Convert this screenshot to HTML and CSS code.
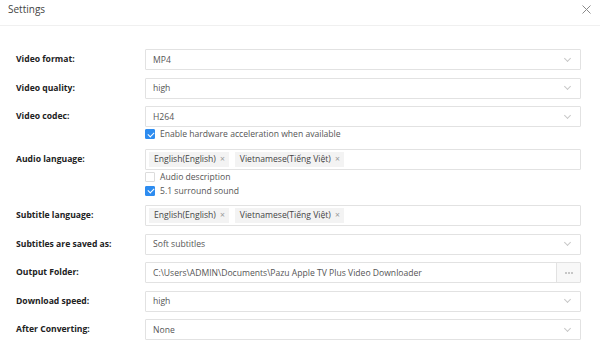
FILE: index.html
```html
<!DOCTYPE html>
<html lang="en">
<head>
    <meta charset="UTF-8">
    <title>Settings</title>
    <link rel="stylesheet" href="styles.css">
</head>
<body>
    <div class="dialog">
        <div class="dialog-header">
            <span class="dialog-title">Settings</span>
            <span class="dialog-close">
                <svg width="9" height="9" viewBox="0 0 9 9"><path d="M0.5 0.5 L8.5 8.5 M8.5 0.5 L0.5 8.5" stroke="#8a8a8a" stroke-width="1" fill="none"/></svg>
            </span>
        </div>

        <div class="form">
            <div class="row">
                <div class="label">Video format:</div>
                <div class="control">
                    <div class="select"><span>MP4</span><i class="chevron"></i></div>
                </div>
            </div>

            <div class="row">
                <div class="label">Video quality:</div>
                <div class="control">
                    <div class="select"><span>high</span><i class="chevron"></i></div>
                </div>
            </div>

            <div class="row">
                <div class="label">Video codec:</div>
                <div class="control">
                    <div class="select"><span>H264</span><i class="chevron"></i></div>
                    <label class="check"><span class="box checked"></span>Enable hardware acceleration when available</label>
                </div>
            </div>

            <div class="row">
                <div class="label">Audio language:</div>
                <div class="control">
                    <div class="multi">
                        <span class="tag">English(English)<b>×</b></span>
                        <span class="tag">Vietnamese(Tiếng Việt)<b>×</b></span>
                    </div>
                    <label class="check"><span class="box"></span>Audio description</label>
                    <label class="check"><span class="box checked"></span>5.1 surround sound</label>
                </div>
            </div>

            <div class="row">
                <div class="label">Subtitle language:</div>
                <div class="control">
                    <div class="multi">
                        <span class="tag">English(English)<b>×</b></span>
                        <span class="tag">Vietnamese(Tiếng Việt)<b>×</b></span>
                    </div>
                </div>
            </div>

            <div class="row">
                <div class="label">Subtitles are saved as:</div>
                <div class="control">
                    <div class="select"><span>Soft subtitles</span><i class="chevron"></i></div>
                </div>
            </div>

            <div class="row">
                <div class="label">Output Folder:</div>
                <div class="control">
                    <div class="path">
                        <span class="path-text">C:\Users\ADMIN\Documents\Pazu Apple TV Plus Video Downloader</span>
                        <span class="path-btn">
                            <svg width="8" height="2" viewBox="0 0 8 2"><circle cx="1" cy="1" r="0.8" fill="#888"/><circle cx="4" cy="1" r="0.8" fill="#888"/><circle cx="7" cy="1" r="0.8" fill="#888"/></svg>
                        </span>
                    </div>
                </div>
            </div>

            <div class="row">
                <div class="label">Download speed:</div>
                <div class="control">
                    <div class="select"><span>high</span><i class="chevron"></i></div>
                </div>
            </div>

            <div class="row">
                <div class="label">After Converting:</div>
                <div class="control">
                    <div class="select"><span>None</span><i class="chevron"></i></div>
                </div>
            </div>
        </div>
    </div>
</body>
</html>
```

FILE: styles.css
```css
:root {
    --text-main: #333333;
    --text-input: #555555;
    --border: #e2e2e2;
    --tag-bg: #f3f3f3;
    --blue: #2d8cf0;
}

* {
    margin: 0;
    padding: 0;
    box-sizing: border-box;
}

body {
    font-family: 'Open Sans', 'Noto Sans', sans-serif;
    font-size: 8.6px;
    color: var(--text-main);
    background: #ffffff;
    width: 600px;
    height: 346px;
    overflow: hidden;
}

.dialog-header {
    height: 26px;
    display: flex;
    align-items: center;
    justify-content: space-between;
    padding: 0 9px 7px 8px;
    border-bottom: 1px solid #f0f0f0;
}

.dialog-title {
    font-size: 10px;
    color: #444;
}

.dialog-close {
    display: flex;
    width: 9px;
    height: 9px;
}

.form {
    padding-top: 23px;
    display: flex;
    flex-direction: column;
    gap: 7.5px;
}

.row {
    display: grid;
    grid-template-columns: 129px 436px;
    padding-left: 16px;
}

.label {
    font-weight: 700;
    line-height: 21px;
    color: #222;
}

.select,
.multi,
.path {
    height: 21px;
    border: 1px solid var(--border);
    border-radius: 1px;
    display: flex;
    align-items: center;
    color: var(--text-input);
}

.select {
    justify-content: space-between;
    padding: 0 10px 0 7px;
}

.chevron {
    width: 5px;
    height: 5px;
    border-right: 1px solid #c8c8c8;
    border-bottom: 1px solid #c8c8c8;
    transform: rotate(45deg);
    margin-top: -3px;
}

.multi {
    padding: 0 3px;
    gap: 6px;
}

.tag {
    background: var(--tag-bg);
    height: 15px;
    line-height: 15px;
    padding: 0 4px 0 5px;
    color: #444;
}

.tag b {
    font-weight: 400;
    color: #999;
    margin-left: 4px;
}

.path-text {
    flex: 1;
    padding-left: 7px;
    white-space: nowrap;
    overflow: hidden;
}

.path-btn {
    width: 24px;
    height: 100%;
    border-left: 1px solid var(--border);
    background: #f8f8f8;
    display: flex;
    align-items: center;
    justify-content: center;
}

.check {
    display: flex;
    align-items: center;
    height: 14px;
    gap: 5px;
    color: var(--text-input);
}

.box {
    width: 10px;
    height: 10px;
    border: 1px solid #dcdcdc;
    border-radius: 1px;
    position: relative;
}

.box.checked {
    background: var(--blue);
    border-color: var(--blue);
}

.box.checked::after {
    content: '';
    position: absolute;
    left: 2.5px;
    top: 0.5px;
    width: 3px;
    height: 5px;
    border-right: 1.5px solid #fff;
    border-bottom: 1.5px solid #fff;
    transform: rotate(45deg);
}
```
